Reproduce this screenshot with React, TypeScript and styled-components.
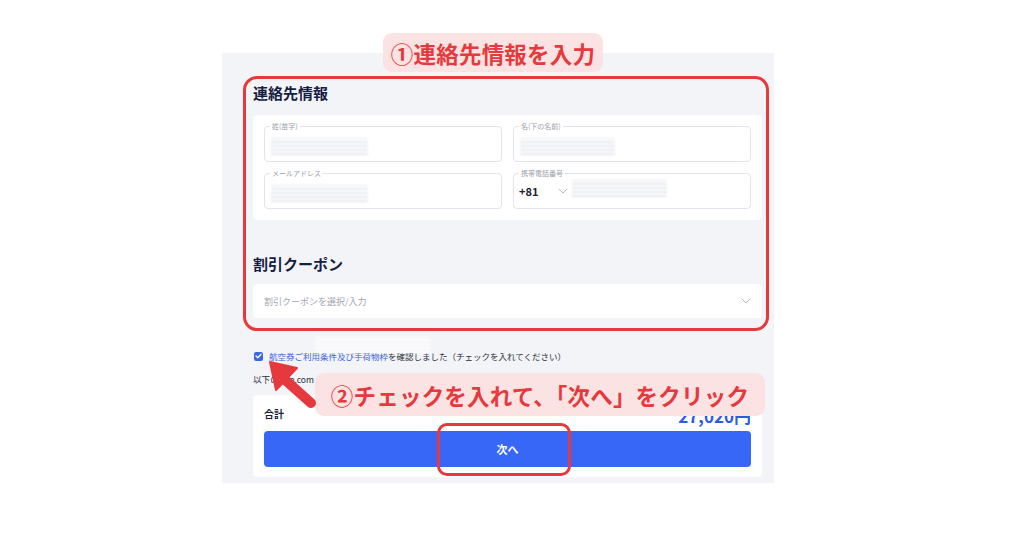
import * as React from 'react';
import styled, { createGlobalStyle } from 'styled-components';

const GlobalStyle = createGlobalStyle`
  html, body {
    margin: 0;
    padding: 0;
    background: #ffffff;
  }
  body {
    font-family: "Noto Sans CJK JP", "Noto Sans", sans-serif;
  }
`;

const RED = '#e6393d';

const Stage = styled.div`
  position: relative;
  width: 1024px;
  height: 538px;
  box-sizing: border-box;
  padding: 53px 0 0 222px;
  overflow: hidden;
  background: #fff;
`;

const Panel = styled.div`
  position: relative;
  width: 552px;
  height: 430px;
  box-sizing: border-box;
  padding: 0 12px 0 31px;
  background: #f3f4f7;
  display: flex;
  flex-direction: column;
`;

const Heading = styled.h2<{ $top: number }>`
  margin: ${(p) => p.$top}px 0 0;
  height: 20px;
  line-height: 20px;
  font-size: 15px;
  font-weight: 700;
  color: #13203f;
`;

const Card = styled.div`
  margin-top: 12px;
  background: #fff;
  border-radius: 4px;
  padding: 11px;
  display: grid;
  grid-template-columns: 1fr 1fr;
  gap: 11px;
`;

const Field = styled.div`
  position: relative;
  height: 36px;
  box-sizing: border-box;
  border: 1px solid #e1e4ea;
  border-radius: 4px;
  display: flex;
  align-items: center;
  padding: 0 6px;
`;

const FloatLabel = styled.span`
  position: absolute;
  top: -6px;
  left: 5px;
  padding: 0 2px;
  background: #fff;
  font-size: 7px;
  line-height: 10px;
  color: #9a9ea8;
`;

const Blur = styled.span<{ $w: number; $light?: boolean; $lift?: number }>`
  display: inline-block;
  width: ${(p) => p.$w}px;
  height: 17px;
  margin-top: ${(p) => 4 - (p.$lift ?? 0)}px;
  background: repeating-linear-gradient(
    0deg,
    ${(p) => (p.$light ? 'rgba(255,255,255,0.95)' : '#e6e8ed')} 0 2px,
    transparent 2px 4px
  );
  filter: blur(1.2px);
`;

const Dial = styled.span`
  font-size: 11px;
  font-weight: 600;
  color: #1b2236;
  margin-left: -1px;
  margin-right: 20px;
`;

const Chevron = () => (
  <svg width={10} height={6} viewBox="0 0 10 6" fill="none">
    <path d="M1 1l4 4 4-4" stroke="#b8bcc5" strokeWidth="1" strokeLinecap="round" strokeLinejoin="round" />
  </svg>
);

const ChevronSlot = styled.span`
  display: inline-flex;
  margin-right: 4px;
`;

const Select = styled.div`
  margin-top: 10px;
  height: 34px;
  background: #fff;
  border-radius: 4px;
  display: flex;
  align-items: center;
  justify-content: space-between;
  padding: 0 11px;
  font-size: 9px;
  color: #a3a7b0;
`;

const Ghost = styled.div`
  margin: 14px 0 0 62px;
  height: 14px;
  display: flex;
`;

const CheckRow = styled.div`
  margin-top: 3px;
  height: 14px;
  display: flex;
  align-items: center;
  gap: 6px;
  font-size: 8.5px;
  color: #2a2f3d;
  white-space: nowrap;
`;

const Box = styled.span`
  width: 9px;
  height: 9px;
  border-radius: 2px;
  background: #3d66e6;
  display: inline-flex;
  align-items: center;
  justify-content: center;
  margin-left: 1px;
`;

const Link = styled.span`
  color: #3b63d9;
`;

const Note = styled.div`
  margin-top: 9px;
  height: 14px;
  line-height: 14px;
  font-size: 8.6px;
  color: #2a2f3d;
`;

const Summary = styled.div`
  margin-top: 9px;
  background: #fff;
  border-radius: 4px;
  padding: 9px 11px 10px;
  display: flex;
  flex-direction: column;
  gap: 9px;
`;

const TotalRow = styled.div`
  height: 18px;
  display: flex;
  align-items: center;
  justify-content: space-between;
`;

const TotalLabel = styled.span`
  font-size: 10px;
  font-weight: 700;
  color: #1b2236;
`;

const Price = styled.span`
  font-size: 17px;
  font-weight: 700;
  color: #2d5be3;
  margin-top: 4px;
`;

const NextButton = styled.button`
  height: 36px;
  border: 0;
  border-radius: 4px;
  background: #3667f6;
  color: #fff;
  font-family: inherit;
  font-size: 11px;
  font-weight: 600;
`;

const Frame = styled.div`
  position: absolute;
  left: 21px;
  top: 23px;
  width: 526px;
  height: 255px;
  box-sizing: border-box;
  border: 3.5px solid ${RED};
  border-radius: 14px;
  pointer-events: none;
`;

const Callout = styled.div<{ $x: number; $y: number; $w: number; $h: number }>`
  position: absolute;
  left: ${(p) => p.$x}px;
  top: ${(p) => p.$y}px;
  width: ${(p) => p.$w}px;
  height: ${(p) => p.$h}px;
  border-radius: 9px;
  background: rgba(252, 226, 226, 0.98);
  display: flex;
  align-items: center;
  justify-content: center;
  font-size: 22.5px;
  font-weight: 700;
  color: ${RED};
  white-space: nowrap;
  letter-spacing: 0.2px;
`;

const ButtonRing = styled.div`
  position: absolute;
  left: 437px;
  top: 423px;
  width: 134px;
  height: 53px;
  box-sizing: border-box;
  border: 3px solid ${RED};
  border-radius: 10px;
`;

const ArrowLayer = styled.svg`
  position: absolute;
  left: 255px;
  top: 352px;
`;

const fields = [
  { label: '姓(苗字)', w: 97 },
  { label: '名(下の名前)', w: 95 },
  { label: 'メールアドレス', w: 97 },
];

export default function App() {
  return (
    <>
      <GlobalStyle />
      <Stage>
        <Panel>
          <Heading $top={30}>連絡先情報</Heading>
          <Card>
            {fields.map((f) => (
              <Field key={f.label}>
                <FloatLabel>{f.label}</FloatLabel>
                <Blur $w={f.w} />
              </Field>
            ))}
            <Field>
              <FloatLabel>携帯電話番号</FloatLabel>
              <Dial>+81</Dial>
              <ChevronSlot>
                <Chevron />
              </ChevronSlot>
              <Blur $w={95} $lift={10} />
            </Field>
          </Card>

          <Heading $top={34}>割引クーポン</Heading>
          <Select>
            <span>割引クーポンを選択/入力</span>
            <Chevron />
          </Select>

          <Ghost>
            <Blur $w={115} $light />
          </Ghost>
          <CheckRow>
            <Box>
              <svg width="7" height="6" viewBox="0 0 7 6" fill="none">
                <path d="M1 3l1.8 1.8L6 1.2" stroke="#fff" strokeWidth="1.3" strokeLinecap="round" strokeLinejoin="round" />
              </svg>
            </Box>
            <span>
              <Link>航空券ご利用条件及び手荷物枠</Link>を確認しました（チェックを入れてください）
            </span>
          </CheckRow>
          <Note>以下のTrip.com</Note>

          <Summary>
            <TotalRow>
              <TotalLabel>合計</TotalLabel>
              <Price>27,020円</Price>
            </TotalRow>
            <NextButton>次へ</NextButton>
          </Summary>

          <Frame />
        </Panel>

        <Callout $x={383} $y={33} $w={220} $h={39}>①連絡先情報を入力</Callout>
        <Callout $x={315} $y={373} $w={450} $h={43}>②チェックを入れて、「次へ」をクリック</Callout>
        <ButtonRing />
        <ArrowLayer width="70" height="62" viewBox="0 0 70 62">
          <line x1="56" y1="51" x2="28" y2="26" stroke={RED} strokeWidth="10" strokeLinecap="round" />
          <polygon points="15,10 42,16 21,38" fill={RED} strokeLinejoin="round" stroke={RED} strokeWidth="2" />
        </ArrowLayer>
      </Stage>
    </>
  );
}
